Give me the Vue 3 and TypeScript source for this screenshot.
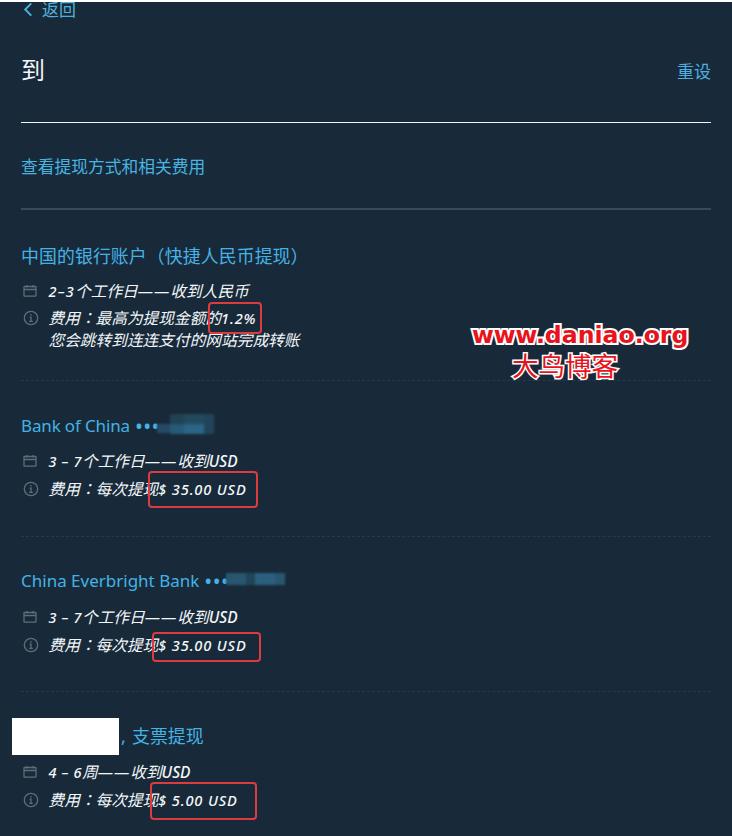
<script setup lang="ts">
interface Run {
  text: string
  kind: 'cjk' | 'digits' | 'unit' | 'price' | 'dash' | 'colon'
}
interface Line {
  icon: 'calendar' | 'info' | ''
  runs: Run[]
}
interface Method {
  id: string
  title: string
  latin: boolean
  masked?: string
  lines: Line[]
}

const run = (kind: Run['kind'], text: string): Run => ({ kind, text })
const c = (text: string): Run => run('cjk', text)
const d = (text: string): Run => run('digits', text)
const price = (text: string): Run => run('price', text)
const usd = run('unit', 'USD')
const dash = run('dash', '——')
const colon = run('colon', '：')

// Splits a title so that full-width brackets can be centred in their cell.
const parts = (title: string): string[] => title.split(/([（）])/).filter(Boolean)
const isBracket = (text: string): boolean => text === '（' || text === '）'

const methods: Method[] = [
  {
    id: 'express',
    title: '中国的银行账户（快捷人民币提现）',
    latin: false,
    lines: [
      { icon: 'calendar', runs: [d('2–3'), c('个工作日'), dash, c('收到人民币')] },
      { icon: 'info', runs: [c('费用'), colon, c('最高为提现金额的'), price('1.2%')] },
      { icon: '', runs: [c('您会跳转到连连支付的网站完成转账')] },
    ],
  },
  {
    id: 'boc',
    title: 'Bank of China',
    latin: true,
    masked: '•••',
    lines: [
      { icon: 'calendar', runs: [d('3 – 7'), c('个工作日'), dash, c('收到'), usd] },
      { icon: 'info', runs: [c('费用'), colon, c('每次提现'), price('$ 35.00 USD')] },
    ],
  },
  {
    id: 'ceb',
    title: 'China Everbright Bank',
    latin: true,
    masked: '•••',
    lines: [
      { icon: 'calendar', runs: [d('3 – 7'), c('个工作日'), dash, c('收到'), usd] },
      { icon: 'info', runs: [c('费用'), colon, c('每次提现'), price('$ 35.00 USD')] },
    ],
  },
  {
    id: 'check',
    title: '支票提现',
    latin: false,
    lines: [
      { icon: 'calendar', runs: [d('4 – 6'), c('周'), dash, c('收到'), usd] },
      { icon: 'info', runs: [c('费用'), colon, c('每次提现'), price('$ 5.00 USD')] },
    ],
  },
]
</script>

<template>
  <main class="page">
    <a class="back">
      <svg class="chevron" viewBox="0 0 10 16"><path d="M8.5 1.5 2 8l6.5 6.5" /></svg>
      <span>返回</span>
    </a>
    <header class="header">
      <h1>到</h1>
      <a class="reset">重设</a>
    </header>
    <div class="fees"><a>查看提现方式和相关费用</a></div>

    <section v-for="m in methods" :key="m.id" class="method" :class="m.id">
      <h2 :class="{ western: m.latin }">
        <template v-if="m.id === 'check'"><span class="redacted"></span><span class="comma">,</span></template>
        <span class="name"><span v-for="(t, i) in parts(m.title)" :key="i" :class="{ bracket: isBracket(t) }">{{ t }}</span></span>
        <span v-if="m.masked" class="dots">{{ m.masked }}</span>
        <span v-if="m.masked" class="mosaic"><i></i><i></i><i></i><i></i></span>
      </h2>
      <div v-for="(line, i) in m.lines" :key="i" class="line">
        <span class="icon">
          <svg v-if="line.icon === 'calendar'" class="cal" viewBox="0 0 14 12">
            <rect x="1" y="1.5" width="12" height="9.7" rx="0.6" />
            <path d="M1 4.5h12M4 0v2.5M10 0v2.5" />
          </svg>
          <svg v-else-if="line.icon === 'info'" class="info" viewBox="0 0 16 16">
            <circle cx="8" cy="8" r="6.7" />
            <path d="M8 4v1.5M6.6 7.2H8v4M6.2 11.4h3.6" />
          </svg>
        </span>
        <p><span v-for="(r, k) in line.runs" :key="k" :class="r.kind">{{ r.text }}</span></p>
      </div>
    </section>

    <div class="mark m1"></div>
    <div class="mark m2"></div>
    <div class="mark m3"></div>
    <div class="mark m4"></div>
    <div class="watermark">
      <span class="site">www.daniao.org</span>
      <span class="blog">大鸟博客</span>
    </div>
  </main>
</template>

<style>
body {
  margin: 0;
  background: #182a39;
}
</style>

<style scoped>
.page {
  position: relative;
  box-sizing: border-box;
  width: 732px;
  height: 836px;
  overflow: hidden;
  padding: 0 21px;
  border-top: 2px solid #fff;
  background: #182a39;
  color: #f3f7fa;
  font-family: 'Noto Sans', 'Noto Sans CJK SC', sans-serif;
}
.back {
  display: flex;
  align-items: center;
  gap: 9px;
  height: 15px;
  padding: 0 0 1px 2px;
  color: #4fb0dc;
  font-size: 17px;
  line-height: 15px;
}
.chevron {
  width: 10px;
  height: 15px;
  fill: none;
  stroke: #4fb4e0;
  stroke-width: 2;
}
.header {
  display: flex;
  align-items: center;
  justify-content: space-between;
  height: 104px;
  border-bottom: 1px solid #f4f8fa;
}
.header h1 {
  margin: 0;
  font-size: 24px;
  font-weight: 400;
  line-height: 30px;
}
.reset {
  color: #4fb0e0;
  font-size: 17px;
}
.fees {
  display: flex;
  align-items: center;
  height: 85px;
  border-bottom: 2px solid #344c5c;
  color: #48b4e2;
  font-size: 16.75px;
}
.method {
  box-sizing: border-box;
  height: 156px;
  padding-top: 33px;
  border-bottom: 1px dashed #263b4a;
}
.express {
  height: 171px;
}
.ceb {
  height: 155px;
  padding-top: 32px;
}
.check {
  padding-top: 32px;
  border-bottom: 0;
}
.method h2 {
  display: flex;
  align-items: center;
  height: 24px;
  margin: 0 0 13px;
  color: #45b2e6;
  font-size: 17.9px;
  font-weight: 400;
  line-height: 24px;
  white-space: nowrap;
}
.express .name {
  letter-spacing: 0.08px;
}
.bracket {
  font-family: 'Noto Sans CJK TC', sans-serif;
}
.method h2.western {
  font-size: 17px;
}
.boc h2.western {
  margin-bottom: 12px;
}
.boc .name {
  letter-spacing: -0.15px;
}
.dots {
  width: 24px;
  margin-left: 5px;
  font-size: 21px;
  letter-spacing: 0.4px;
}
.mosaic {
  display: flex;
  height: 20px;
  margin: -4px 0 0 -2px;
  filter: blur(1px);
}
.mosaic i {
  width: 14px;
  background: #265370;
}
.mosaic i:nth-child(1) {
  width: 13px;
  height: 9px;
  margin-top: 10px;
  background: #244b65;
}
.mosaic i:nth-child(2) {
  background: linear-gradient(#204252 45%, #275a77 55%);
}
.mosaic i:nth-child(3) {
  width: 20px;
  background: linear-gradient(#234a5c 45%, #2b6487 55%);
}
.mosaic i:nth-child(4) {
  width: 10px;
  background: #21445a;
}
.ceb .mosaic {
  height: 12px;
  margin: -4px 0 0 -2px;
}
.ceb .mosaic i {
  background: #28566f;
}
.ceb .mosaic i:nth-child(1) {
  width: 20px;
  height: 12px;
  margin-top: 0;
}
.ceb .mosaic i:nth-child(2) {
  width: 9px;
  background: #214558;
}
.ceb .mosaic i:nth-child(3) {
  background: #2a607d;
}
.redacted {
  width: 107px;
  height: 37px;
  margin-left: -9px;
  background: #fff;
}
.comma {
  box-sizing: border-box;
  width: 13px;
  padding-left: 2px;
}
.line {
  display: flex;
  align-items: center;
  height: 22px;
  margin-bottom: 6px;
}
.express .line {
  margin-bottom: 5px;
}
.express .line:nth-last-child(2) {
  margin-bottom: 0;
}
.icon {
  display: flex;
  align-items: center;
  width: 27.5px;
}
.icon svg {
  fill: none;
  stroke: #5d6e79;
  stroke-width: 1.3;
}
.cal {
  width: 14px;
  height: 12px;
  margin-left: 2px;
}
.info {
  width: 16px;
  height: 16px;
  margin-left: 2px;
}
.line p {
  margin: 0;
  font-size: 15.7px;
  font-style: italic;
  line-height: 22px;
  white-space: nowrap;
}
.line .digits {
  font-size: 14.5px;
  font-weight: 500;
  letter-spacing: 0.6px;
}
.express .digits {
  letter-spacing: 1.2px;
}
.line .price {
  font-size: 14.6px;
  font-weight: 500;
  letter-spacing: 0.85px;
}
.unit {
  font-size: 15.5px;
  font-weight: 500;
}
.dash {
  font-family: 'Noto Sans', sans-serif;
  font-size: 16px;
  letter-spacing: 0.9px;
}
.colon {
  font-family: 'Noto Sans CJK TC', sans-serif;
}
.mark {
  position: absolute;
  box-sizing: border-box;
  border: 2px solid #dc3b40;
  border-radius: 4px;
}
.m1 {
  left: 208px;
  top: 300px;
  width: 54px;
  height: 32px;
}
.m2 {
  left: 148px;
  top: 469px;
  width: 110px;
  height: 37px;
}
.m3 {
  left: 152px;
  top: 630px;
  width: 109px;
  height: 30px;
}
.m4 {
  left: 150px;
  top: 780px;
  width: 107px;
  height: 38px;
}
.watermark {
  position: absolute;
  left: 472px;
  top: 317px;
  display: flex;
  flex-direction: column;
  color: #e8131c;
  -webkit-text-stroke: 4px #fff;
  paint-order: stroke fill;
  stroke-linejoin: round;
  white-space: nowrap;
}
.site {
  font: bold 23.6px/32px 'DejaVu Sans', sans-serif;
}
.blog {
  margin-left: 40px;
  font: 400 26.5px/28px 'Noto Sans CJK SC', sans-serif;
  -webkit-text-stroke-width: 3px;
}
</style>
